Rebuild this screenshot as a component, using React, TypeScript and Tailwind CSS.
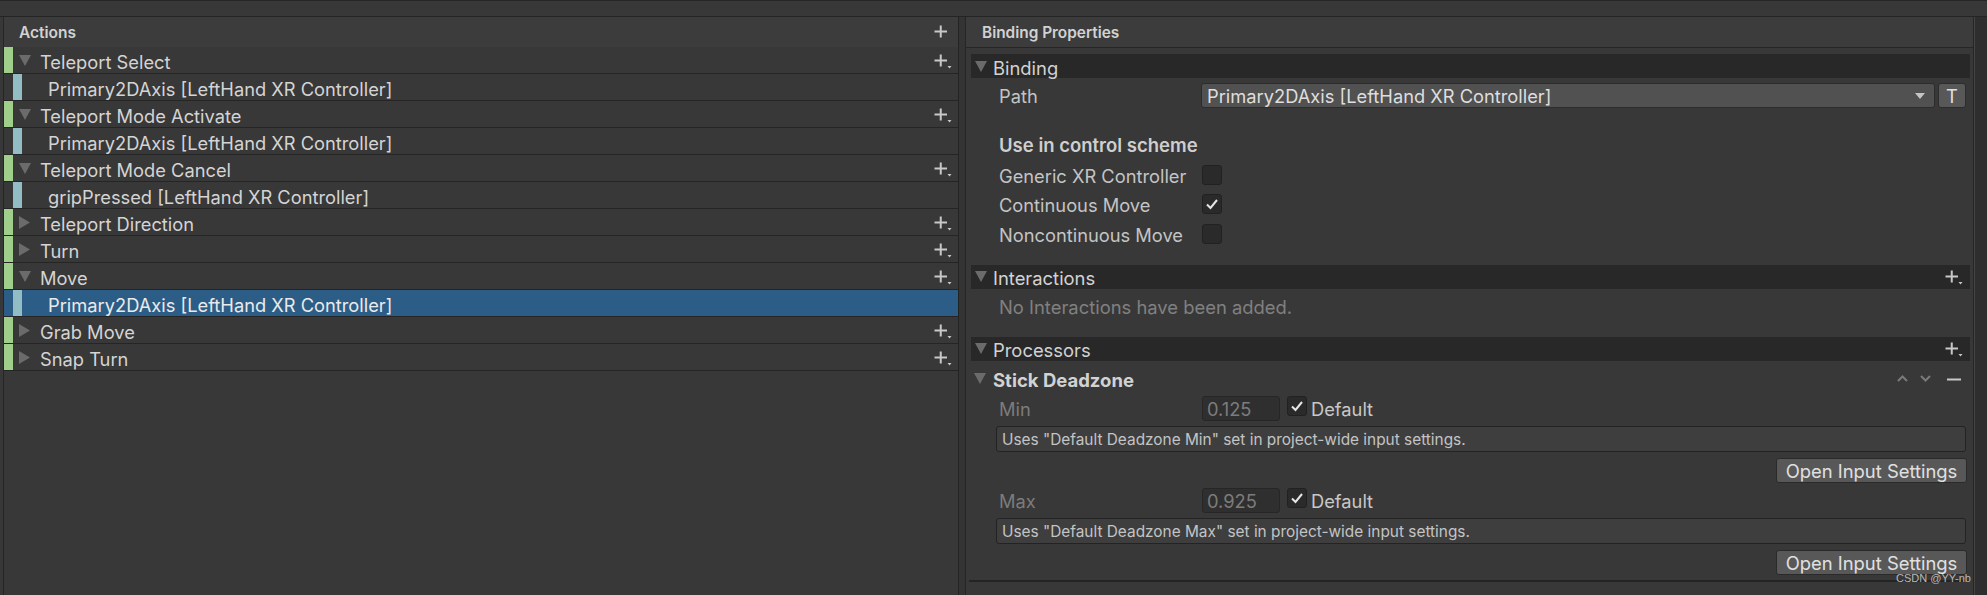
import type { ReactNode } from 'react'

type ActionRow = {
  kind: 'action' | 'binding'
  label: string
  open?: boolean
  selected?: boolean
}

const rows: ActionRow[] = [
  { kind: 'action', label: 'Teleport Select', open: true },
  { kind: 'binding', label: 'Primary2DAxis [LeftHand XR Controller]' },
  { kind: 'action', label: 'Teleport Mode Activate', open: true },
  { kind: 'binding', label: 'Primary2DAxis [LeftHand XR Controller]' },
  { kind: 'action', label: 'Teleport Mode Cancel', open: true },
  { kind: 'binding', label: 'gripPressed [LeftHand XR Controller]' },
  { kind: 'action', label: 'Teleport Direction' },
  { kind: 'action', label: 'Turn' },
  { kind: 'action', label: 'Move', open: true },
  { kind: 'binding', label: 'Primary2DAxis [LeftHand XR Controller]', selected: true },
  { kind: 'action', label: 'Grab Move' },
  { kind: 'action', label: 'Snap Turn' },
]

// unity's text sits a little low in its rows
const nudge = 'pt-[4px] leading-none'
const nudgeSm = 'pt-[2px] leading-none'

const Foldout = ({ open }: { open?: boolean }) =>
  open ? (
    <svg width="12" height="11" viewBox="0 0 12 11" className="shrink-0">
      <path d="M0 0 H12 L6 11 Z" fill="#6b6b6b" />
    </svg>
  ) : (
    <svg width="11" height="13" viewBox="0 0 11 13" className="shrink-0">
      <path d="M0 0 L11 6.5 L0 13 Z" fill="#6b6b6b" />
    </svg>
  )

const PlusIcon = ({ menu }: { menu?: boolean }) => (
  <svg width="18" height="15" viewBox="0 0 18 15" className="shrink-0">
    <path d="M0.5 6.5 H13 M6.75 0.5 V12.5" stroke="#c8c8c8" strokeWidth="2" />
    {menu && <path d="M13.5 12 H17.5 L15.5 14.5 Z" fill="#c8c8c8" />}
  </svg>
)

const Check = () => (
  <svg width="14" height="12" viewBox="0 0 14 12">
    <path d="M2 6.5 L5.5 10 L12 2" stroke="#e6e6e6" strokeWidth="2" fill="none" />
  </svg>
)

const Checkbox = ({ checked }: { checked?: boolean }) => (
  <div className="w-[20px] h-[20px] rounded-[3px] bg-[#2a2a2a] border border-[#212121] flex items-center justify-center shrink-0">
    {checked && <Check />}
  </div>
)

const SectionBar = ({ title, plus }: { title: string; plus?: boolean }) => (
  <div className="ml-[5px] mr-[3px] h-[24px] bg-[#282828] flex items-center">
    <div className="ml-[4px] mr-[6px]">
      <Foldout open />
    </div>
    <span className={`text-[18.4px] text-[#d2d2d2] ${nudge}`}>{title}</span>
    {plus && (
      <div className="ml-auto mr-[7px] mt-[2px]">
        <PlusIcon menu />
      </div>
    )}
  </div>
)

const ToggleRow = ({ label, checked }: { label: string; checked?: boolean }) => (
  <div className="h-[29.5px] flex items-center pl-[33px]">
    <span className={`w-[203px] text-[18.3px] text-[#c4c4c4] ${nudgeSm}`}>{label}</span>
    <Checkbox checked={checked} />
  </div>
)

const ParamBlock = ({ label, value, which }: { label: string; value: string; which: string }) => (
  <>
    <div className="h-[25px] flex items-center pl-[33px]">
      <span className={`w-[203px] text-[18.3px] text-[#7c7c7c] ${nudgeSm}`}>{label}</span>
      <div className="w-[78px] h-[25px] rounded-[3px] bg-[#2f2f2f] border border-[#262626] flex items-center pl-[4px] text-[18.3px] text-[#7c7c7c]">
        <span className={nudgeSm}>{value}</span>
      </div>
      <div className="ml-[7px] self-start">
        <Checkbox checked />
      </div>
      <span className={`ml-[4px] text-[18.3px] text-[#c8c8c8] ${nudgeSm}`}>Default</span>
    </div>
    <div className="ml-[30px] mr-[7px] mt-[5px] h-[26px] rounded-[3px] bg-[#3e3e3e] border border-[#232323] flex items-center pl-[5px] text-[15.4px] text-[#c4c4c4]">
      <span className={nudgeSm}>Uses "Default Deadzone {which}" set in project-wide input settings.</span>
    </div>
    <div className="flex justify-end mr-[6px] mt-[6px]">
      <button className="h-[25px] w-[191px] rounded-[3px] bg-[#585858] border border-[#2a2a2a] text-[18.4px] text-[#e0e0e0] flex items-center justify-center">
        <span className={nudgeSm}>Open Input Settings</span>
      </button>
    </div>
  </>
)

const ListRow = ({ row }: { row: ActionRow }): ReactNode => {
  if (row.kind === 'action') {
    return (
      <div className="h-[27px] flex items-stretch border-b border-[#252525]">
        <div className="w-[9px] bg-[#9fcf8b] shrink-0" />
        <div className="flex items-center pl-[6px] flex-1">
          <div className="w-[21px] flex items-center">
            <Foldout open={row.open} />
          </div>
          <span className={`text-[18.3px] text-[#d4d4d4] ${nudge}`}>{row.label}</span>
          <div className="ml-auto mr-[6px] mt-[2px]">
            <PlusIcon menu />
          </div>
        </div>
      </div>
    )
  }
  return (
    <div
      className={`h-[27px] flex items-stretch border-b border-[#252525] ${
        row.selected ? 'bg-[#2c5d87]' : ''
      }`}
    >
      <div className="w-[9px] shrink-0" />
      <div className="w-[9px] bg-[#93bdc4] shrink-0" />
      <div className="flex items-center pl-[26px]">
        <span className={`text-[18.3px] ${nudge} ${row.selected ? 'text-[#eaeaea]' : 'text-[#d4d4d4]'}`}>
          {row.label}
        </span>
      </div>
    </div>
  )
}

export default function App() {
  return (
    <div className="w-[1987px] h-[595px] bg-[#383838] flex flex-col overflow-hidden font-['Inter',sans-serif] relative">
      {/* toolbar strip */}
      <div className="h-[17px] shrink-0 border-t border-[#262626] border-b border-b-[#242424] bg-[#383838]" />

      <div className="flex flex-1 min-h-0">
        {/* actions tree */}
        <div className="ml-[3px] w-[956px] border-l border-[#262626] border-r border-r-[#232323] flex flex-col">
          <div className="h-[30px] shrink-0 bg-[#3c3c3c] flex items-center pl-[15px]">
            <span className={`text-[15.5px] font-semibold text-[#d2d2d2] ${nudgeSm}`}>Actions</span>
            <div className="ml-auto mr-[6px] mt-[1px]">
              <PlusIcon />
            </div>
          </div>
          {rows.map((row, i) => (
            <ListRow key={i} row={row} />
          ))}
        </div>

        {/* splitter */}
        <div className="w-[7px] shrink-0 bg-[#343434] border-r border-[#262626]" />

        {/* binding properties */}
        <div className="w-[1008px] shrink-0 border-r border-[#262626] flex flex-col">
          <div className="h-[31px] shrink-0 bg-[#3c3c3c] border-b border-[#262626] flex items-center pl-[16px]">
            <span className={`text-[15.4px] font-semibold text-[#d2d2d2] ${nudgeSm}`}>Binding Properties</span>
          </div>

          <div className="pt-[6px] flex flex-col">
            <SectionBar title="Binding" />
            <div className="h-[25px] mt-[5px] flex items-center pl-[33px]">
              <span className={`w-[202px] text-[18.3px] text-[#c4c4c4] ${nudgeSm}`}>Path</span>
              <div className="w-[734px] h-[25px] rounded-[3px] bg-[#515151] border border-[#2c2c2c] flex items-center pl-[5px] pr-[9px] text-[18.3px] text-[#dedede]">
                <span className={nudgeSm}>Primary2DAxis [LeftHand XR Controller]</span>
                <svg width="10" height="6" viewBox="0 0 10 6" className="ml-auto">
                  <path d="M0 0 H10 L5 6 Z" fill="#c4c4c4" />
                </svg>
              </div>
              <div className="ml-[3px] w-[28px] h-[25px] rounded-[3px] bg-[#585858] border border-[#2c2c2c] flex items-center justify-center text-[18.3px] text-[#e0e0e0]">
                <span className={nudgeSm}>T</span>
              </div>
            </div>

            <div className="h-[26px] mt-[23px] flex items-center pl-[33px]">
              <span className={`text-[18.5px] font-semibold text-[#cfcfcf] ${nudgeSm}`}>Use in control scheme</span>
            </div>
            <div className="mt-[3px]">
              <ToggleRow label="Generic XR Controller" />
              <ToggleRow label="Continuous Move" checked />
              <ToggleRow label="Noncontinuous Move" />
            </div>

            <div className="mt-[16px]">
              <SectionBar title="Interactions" plus />
            </div>
            <div className="h-[36px] flex items-center pl-[33px]">
              <span className={`text-[18.4px] text-[#808080] ${nudgeSm}`}>No Interactions have been added.</span>
            </div>

            <div className="mt-[12px]">
              <SectionBar title="Processors" plus />
            </div>
            <div className="h-[35px] flex items-center pl-[8px]">
              <Foldout open />
              <span className={`ml-[7px] text-[18.5px] font-bold text-[#d2d2d2] ${nudge}`}>Stick Deadzone</span>
              <div className="ml-auto flex items-center gap-[12px] mr-[12px]">
                <svg width="11" height="7" viewBox="0 0 11 7">
                  <path d="M1 6 L5.5 1.5 L10 6" stroke="#7a7a7a" strokeWidth="2" fill="none" />
                </svg>
                <svg width="11" height="7" viewBox="0 0 11 7">
                  <path d="M1 1 L5.5 5.5 L10 1" stroke="#7a7a7a" strokeWidth="2" fill="none" />
                </svg>
                <svg width="14" height="3" viewBox="0 0 14 3" className="ml-[4px] mt-[3px]">
                  <path d="M0 1.5 H14" stroke="#c8c8c8" strokeWidth="2" />
                </svg>
              </div>
            </div>

            <ParamBlock label="Min" value="0.125" which="Min" />
            <div className="mt-[5px]">
              <ParamBlock label="Max" value="0.925" which="Max" />
            </div>
            <div className="ml-[3px] mr-[3px] mt-[5px] border-b-2 border-[#242424]" />
          </div>
        </div>

        {/* scrollbar edge */}
        <div className="flex-1 bg-[#2e2e2e] border-l border-[#444444]" />
      </div>

      <span className="absolute right-[16px] bottom-[9px] text-[11px] text-[#b8b8b8] font-['Liberation_Sans',sans-serif]">
        CSDN @YY-nb
      </span>
    </div>
  )
}
